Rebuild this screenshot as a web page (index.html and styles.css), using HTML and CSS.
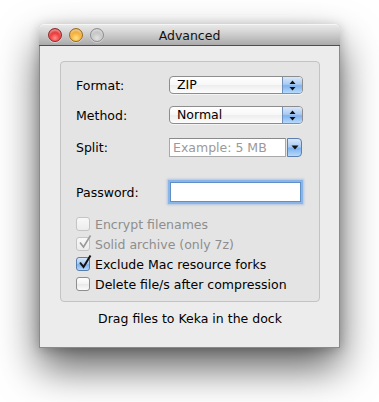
FILE: index.html
```html
<!DOCTYPE html>
<html>
<head>
<meta charset="utf-8">
<link rel="stylesheet" href="styles.css">
</head>
<body>
<div class="stage">
<div class="window">
  <div class="titlebar">
    <div class="lights">
      <span class="light red"></span>
      <span class="light yellow"></span>
      <span class="light grey"></span>
    </div>
    <div class="title">Advanced</div>
    <div></div>
  </div>
  <div class="content">
    <div class="group">
      <div class="row r-format">
        <span class="label">Format:</span>
        <div class="popup">
          <span class="popup-text">ZIP</span>
          <span class="stepper"><svg width="7" height="11" viewBox="0 0 7 11"><path d="M3.5 0.5 L6.5 4 L0.5 4 Z M0.5 7 L6.5 7 L3.5 10.5 Z" fill="#111"/></svg></span>
        </div>
      </div>
      <div class="row r-method">
        <span class="label">Method:</span>
        <div class="popup">
          <span class="popup-text">Normal</span>
          <span class="stepper"><svg width="7" height="11" viewBox="0 0 7 11"><path d="M3.5 0.5 L6.5 4 L0.5 4 Z M0.5 7 L6.5 7 L3.5 10.5 Z" fill="#111"/></svg></span>
        </div>
      </div>
      <div class="row r-split">
        <span class="label">Split:</span>
        <div class="combo">
          <span class="combo-field">Example: 5 MB</span>
          <span class="combo-btn"><svg width="8" height="5" viewBox="0 0 8 5"><path d="M0.5 0.5 L7.5 0.5 L4 4.5 Z" fill="#111"/></svg></span>
        </div>
      </div>
      <div class="row r-pass">
        <span class="label">Password:</span>
        <div class="textfield"></div>
      </div>
      <div class="checks">
        <div class="check disabled"><span class="box"></span><span>Encrypt filenames</span></div>
        <div class="check disabled"><span class="box"><svg class="tick" width="16" height="16" viewBox="0 0 16 16"><path d="M3 8.5 L6.5 13 L13.5 1.5" fill="none" stroke="#9a9a9a" stroke-width="1.6"/></svg></span><span>Solid archive (only 7z)</span></div>
        <div class="check"><span class="box on"><svg class="tick" width="16" height="16" viewBox="0 0 16 16"><path d="M3 8.5 L6.5 13 L13.5 1.5" fill="none" stroke="#111" stroke-width="2"/></svg></span><span>Exclude Mac resource forks</span></div>
        <div class="check"><span class="box"></span><span>Delete file/s after compression</span></div>
      </div>
    </div>
    <div class="footer">Drag files to Keka in the dock</div>
  </div>
</div>
</div>
</body>
</html>
```
FILE: styles.css
```css
html, body {
  margin: 0;
  padding: 0;
  background: #fff;
  height: 100%;
}
body {
  font-family: "DejaVu Sans", "Liberation Sans", sans-serif;
  font-size: 12.5px;
  color: #000;
}
.stage {
  height: 402px;
  box-sizing: border-box;
  padding: 24px 0 0 39px;
}
.window {
  width: 301px;
  height: 324px;
  box-sizing: border-box;
  border: 1px solid #8a8a8a;
  border-top: none;
  border-radius: 5px 5px 0 0;
  background: #ececec;
  box-shadow: 0 20px 40px rgba(0, 0, 0, 0.62), 0 2px 12px rgba(0, 0, 0, 0.22);
  display: flex;
  flex-direction: column;
}
.titlebar {
  height: 22px;
  box-sizing: border-box;
  margin: 0 -1px;
  border-radius: 5px 5px 0 0;
  background: linear-gradient(#ebebeb 0%, #d4d4d4 40%, #aaaaaa 100%);
  border-bottom: 1px solid #4e4e4e;
  box-shadow: inset 0 1px 0 #f6f6f6;
  display: grid;
  grid-template-columns: 1fr auto 1fr;
  align-items: center;
}
.lights {
  display: flex;
  gap: 7px;
  padding-left: 9px;
  padding-top: 1px;
}
.light {
  width: 14px;
  height: 14px;
  border-radius: 50%;
  box-sizing: border-box;
}
.red {
  background: radial-gradient(circle at 50% 75%, #ff8f8f 0%, #f03a3a 45%, #b51d1d 100%);
  border: 1px solid #8e2a2a;
  box-shadow: inset 0 2px 2px rgba(255,255,255,0.5), 0 1px 0 rgba(255,255,255,0.4);
}
.yellow {
  background: radial-gradient(circle at 50% 75%, #ffe08a 0%, #f7b33a 45%, #c57c10 100%);
  border: 1px solid #9a6a1c;
  box-shadow: inset 0 2px 2px rgba(255,255,255,0.5), 0 1px 0 rgba(255,255,255,0.4);
}
.grey {
  background: radial-gradient(circle at 50% 75%, #e2e2e2 0%, #c5c5c5 50%, #a5a5a5 100%);
  border: 1px solid #8f8f8f;
  box-shadow: inset 0 2px 2px rgba(255,255,255,0.5), 0 1px 0 rgba(255,255,255,0.4);
}
.title {
  color: #111;
  padding-top: 1px;
}
.content {
  padding: 15px 0 0 20px;
}
.group {
  width: 260px;
  box-sizing: border-box;
  border: 1px solid #c3c3c3;
  border-radius: 4px;
  background: #e4e4e4;
  padding: 14px 0 7px 15px;
  display: flex;
  flex-direction: column;
}
.row {
  display: grid;
  grid-template-columns: 93px auto;
  align-items: center;
}
.r-format { height: 18px; }
.r-method { height: 18px; margin-top: 12px; }
.r-split { height: 19px; margin-top: 14px; }
.r-pass { height: 22px; margin-top: 24px; }
.popup {
  width: 134px;
  height: 18px;
  box-sizing: border-box;
  border: 1px solid #8d8d8d;
  border-radius: 4px;
  background: linear-gradient(#ffffff, #f7f7f7 50%, #ededed 51%, #fdfdfd);
  display: flex;
  overflow: hidden;
  box-shadow: 0 1px 0 rgba(255,255,255,0.6);
}
.popup-text {
  flex: 1;
  padding-left: 7px;
  line-height: 16px;
}
.stepper {
  width: 19px;
  border-left: 1px solid #6f8fb8;
  background: linear-gradient(#d9e8fa 0%, #a9cbf3 45%, #7fb2ee 55%, #b5dafc 100%);
  display: flex;
  align-items: center;
  justify-content: center;
}
.combo {
  display: flex;
  height: 19px;
}
.combo-field {
  width: 117px;
  box-sizing: border-box;
  border: 1px solid #a9a9a9;
  border-top-color: #8a8a8a;
  background: #fff;
  color: #9a9a9a;
  padding-left: 3px;
  line-height: 17px;
}
.combo-btn {
  width: 15px;
  margin-left: 1px;
  box-sizing: border-box;
  border: 1px solid #5f80ad;
  border-radius: 0 4px 4px 0;
  background: linear-gradient(#d9e8fa 0%, #a9cbf3 45%, #7fb2ee 55%, #b5dafc 100%);
  display: flex;
  align-items: center;
  justify-content: center;
}
.textfield {
  width: 131px;
  height: 20px;
  margin-left: 1px;
  box-sizing: border-box;
  border: 1px solid #5f8fc9;
  background: #fff;
  box-shadow: 0 0 0 2px #8bb5e6, 0 0 2px 3px rgba(120,165,220,0.5);
}
.checks {
  margin-top: 11px;
  display: flex;
  flex-direction: column;
}
.check {
  height: 20px;
  display: flex;
  align-items: center;
  gap: 5px;
}
.check.disabled {
  color: #8e8e8e;
}
.box {
  position: relative;
  width: 14px;
  height: 14px;
  box-sizing: border-box;
  border: 1px solid #8e8e8e;
  border-radius: 3px;
  background: linear-gradient(#ffffff, #f2f2f2 50%, #e8e8e8 51%, #fbfbfb);
}
.disabled .box {
  border-color: #c4c4c4;
  background: linear-gradient(#f8f8f8, #ececec);
}
.box.on {
  border-color: #5a7eab;
  background: linear-gradient(#d9e8fa 0%, #a9cbf3 45%, #7fb2ee 55%, #b5dafc 100%);
}
.tick {
  position: absolute;
  left: 0;
  top: -4px;
}
.footer {
  width: 260px;
  text-align: center;
  margin-top: 9px;
  line-height: 16px;
}
```
